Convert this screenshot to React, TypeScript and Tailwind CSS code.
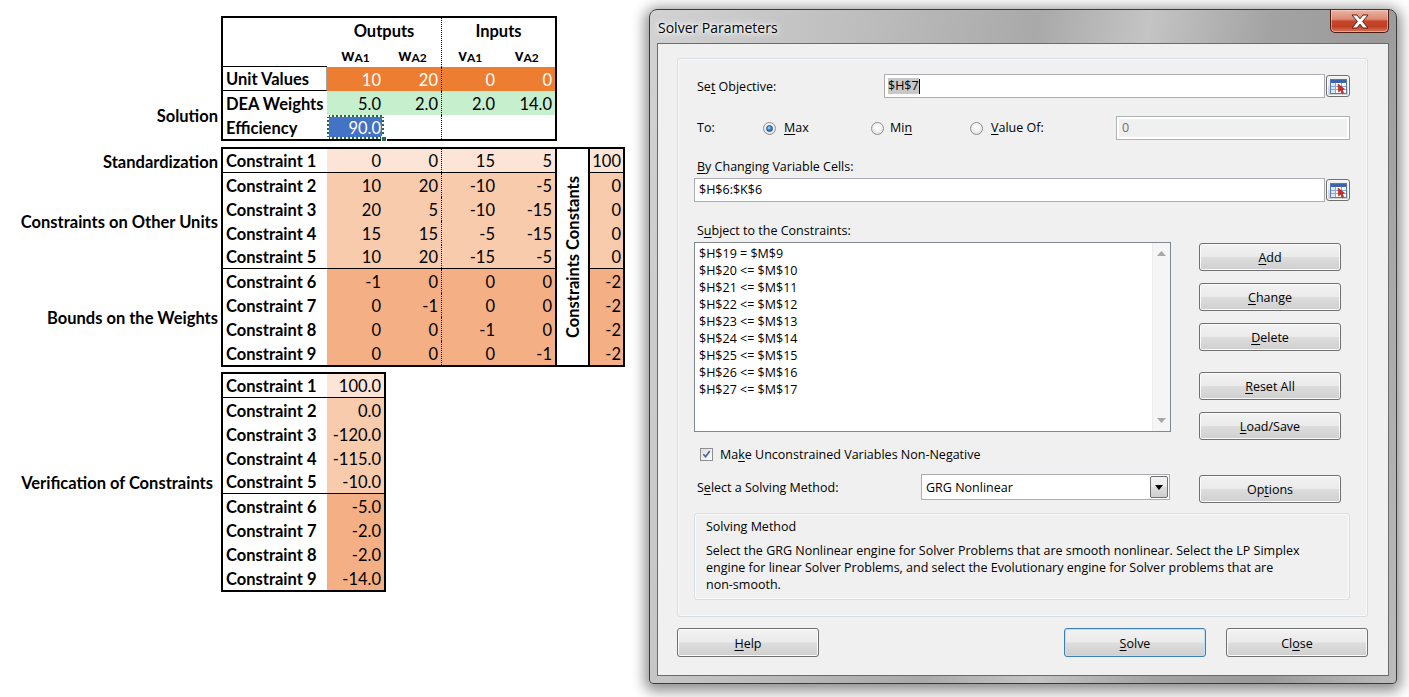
import React from "react";

type R = { label: string; vals: string[]; c: string; bg: string; line?: boolean };

const t2: R[] = [
  { label: "Constraint 1", vals: ["0", "0", "15", "5"], c: "100", bg: "bg-[#FCE4D6]", line: true },
  { label: "Constraint 2", vals: ["10", "20", "-10", "-5"], c: "0", bg: "bg-[#F8CBAD]" },
  { label: "Constraint 3", vals: ["20", "5", "-10", "-15"], c: "0", bg: "bg-[#F8CBAD]" },
  { label: "Constraint 4", vals: ["15", "15", "-5", "-15"], c: "0", bg: "bg-[#F8CBAD]" },
  { label: "Constraint 5", vals: ["10", "20", "-15", "-5"], c: "0", bg: "bg-[#F8CBAD]", line: true },
  { label: "Constraint 6", vals: ["-1", "0", "0", "0"], c: "-2", bg: "bg-[#F4B084]" },
  { label: "Constraint 7", vals: ["0", "-1", "0", "0"], c: "-2", bg: "bg-[#F4B084]" },
  { label: "Constraint 8", vals: ["0", "0", "-1", "0"], c: "-2", bg: "bg-[#F4B084]" },
  { label: "Constraint 9", vals: ["0", "0", "0", "-1"], c: "-2", bg: "bg-[#F4B084]" },
];

const t3 = ["100.0", "0.0", "-120.0", "-115.0", "-10.0", "-5.0", "-2.0", "-2.0", "-14.0"];

function Num({ children, cls = "" }: { children?: React.ReactNode; cls?: string }) {
  return <div className={`w-[57px] h-full flex items-center justify-end pr-[3px] pt-[2px] ${cls}`}>{children}</div>;
}

const labCell = "w-[104px] h-full flex items-center pl-[3px] pt-[2px] font-bold whitespace-nowrap";

function Table1() {
  return (
    <div className="w-[336px] border-2 border-black bg-white flex flex-col">
      <div className="h-[49px] flex">
        <div className="w-[104px] border-b border-black" />
        <div className="w-[114px] flex flex-col font-bold">
          <div className="h-[25px] flex items-center justify-center pt-[2px]">Outputs</div>
          <div className="h-[24px] flex">
            <div className="w-[57px] flex items-center justify-center">w<sub className="text-[12px]">A1</sub></div>
            <div className="w-[57px] flex items-center justify-center">w<sub className="text-[12px]">A2</sub></div>
          </div>
        </div>
        <div className="w-[114px] flex flex-col font-bold border-l border-dotted border-black">
          <div className="h-[25px] flex items-center justify-center pt-[2px]">Inputs</div>
          <div className="h-[24px] flex">
            <div className="w-[57px] flex items-center justify-center">v<sub className="text-[12px]">A1</sub></div>
            <div className="w-[57px] flex items-center justify-center">v<sub className="text-[12px]">A2</sub></div>
          </div>
        </div>
      </div>
      <div className="h-[24px] flex">
        <div className={`${labCell} border-b border-black border-r border-r-[#a6a6a6]`}>Unit Values</div>
        <div className="flex bg-[#ED7D31] text-white">
          <Num>10</Num>
          <Num>20</Num>
          <Num cls="border-l border-dotted border-black">0</Num>
          <Num>0</Num>
        </div>
      </div>
      <div className="h-[24px] flex">
        <div className={labCell}>DEA Weights</div>
        <div className="flex bg-[#C6EFCE]">
          <Num>5.0</Num>
          <Num>2.0</Num>
          <Num cls="border-l border-dotted border-black">2.0</Num>
          <Num>14.0</Num>
        </div>
      </div>
      <div className="h-[24px] flex">
        <div className={labCell}>Efficiency</div>
        <div className="relative w-[57px] h-full bg-[#4472C4] text-white flex items-center justify-end pr-[3px] pt-[2px]">
          90.0
          <div className="absolute inset-0 border-2 border-[#1f6b43]" />
          <div className="absolute inset-0 border-2 border-dotted border-white" />
          <div className="absolute -right-[3px] -bottom-[3px] w-[6px] h-[6px] bg-[#1f6b43] border border-white" />
        </div>
        <Num />
        <Num cls="border-l border-dotted border-black" />
        <Num />
      </div>
    </div>
  );
}

function Table2() {
  return (
    <div className="w-[404px] border-2 border-black bg-white flex">
      <div className="flex flex-col">
        {t2.map((r) => (
          <div key={r.label} className={`h-[24px] flex ${r.line ? "border-b border-black" : ""}`}>
            <div className={`${labCell} bg-white`}>{r.label}</div>
            <div className={`flex ${r.bg}`}>
              <Num>{r.vals[0]}</Num>
              <Num>{r.vals[1]}</Num>
              <Num cls="border-l border-dotted border-black">{r.vals[2]}</Num>
              <Num>{r.vals[3]}</Num>
            </div>
          </div>
        ))}
      </div>
      <div className="w-[2px] bg-black" />
      <div className="w-[31px] flex items-center justify-center pl-[2px]">
        <span className="[writing-mode:vertical-rl] rotate-180 font-bold whitespace-nowrap">Constraints Constants</span>
      </div>
      <div className="w-[2px] bg-black" />
      <div className="flex flex-col w-[33px]">
        {t2.map((r) => (
          <div key={r.label} className={`h-[24px] flex items-center justify-end pr-[2px] pt-[2px] ${r.bg} ${r.line ? "border-b border-black" : ""}`}>
            {r.c}
          </div>
        ))}
      </div>
    </div>
  );
}

function Table3() {
  return (
    <div className="w-[165px] border-2 border-black bg-white flex flex-col">
      {t3.map((v, i) => (
        <div key={i} className={`h-[24px] flex ${i === 0 || i === 4 ? "border-b border-black" : ""}`}>
          <div className={labCell}>Constraint {i + 1}</div>
          <Num cls={i === 0 ? "bg-[#FCE4D6]" : i < 5 ? "bg-[#F8CBAD]" : "bg-[#F4B084]"}>{v}</Num>
        </div>
      ))}
    </div>
  );
}

function Sheet() {
  const lab = "flex items-center justify-end pr-[3px] pt-[2px] font-bold whitespace-nowrap";
  return (
    <div className="w-[649px] shrink-0 pt-[16px] flex flex-col font-['Lato','Liberation_Sans',sans-serif] text-[16.5px] leading-none text-black">
      <div className="flex">
        <div className="w-[221px] flex flex-col">
          <div className="h-[75px]" />
          <div className={`h-[48px] ${lab}`}>Solution</div>
        </div>
        <Table1 />
      </div>
      <div className="flex mt-[6px]">
        <div className="w-[221px] flex flex-col">
          <div className="h-[2px]" />
          <div className={`h-[24px] ${lab}`}>Standardization</div>
          <div className={`h-[96px] ${lab}`}>Constraints on Other Units</div>
          <div className={`h-[96px] ${lab}`}>Bounds on the Weights</div>
        </div>
        <Table2 />
      </div>
      <div className="flex mt-[5px]">
        <div className="w-[221px] flex flex-col">
          <div className="h-[2px]" />
          <div className={`h-[216px] ${lab} pr-[8px]`}>Verification of Constraints</div>
        </div>
        <Table3 />
      </div>
    </div>
  );
}

const btnBg =
  "bg-[linear-gradient(to_bottom,#f2f2f2_0%,#ebebeb_48%,#dddddd_52%,#cfcfcf_100%)]";

function Btn({ children, focus = false, cls = "" }: { children: React.ReactNode; focus?: boolean; cls?: string }) {
  return (
    <div
      className={`w-[142px] h-[28px] rounded-[3px] border ${
        focus ? "border-[#3c7fb1] shadow-[inset_0_0_0_1px_#b8e2f8]" : "border-[#707070] shadow-[inset_0_0_0_1px_#fbfbfb]"
      } ${btnBg} flex items-center justify-center pt-[2px] ${cls}`}
    >
      {children}
    </div>
  );
}

function U({ children }: { children: React.ReactNode }) {
  return <span className="underline underline-offset-2">{children}</span>;
}

function RefBtn() {
  return (
    <div className={`w-[24px] h-[22px] rounded-[3px] border border-[#707070] ${btnBg} shadow-[inset_0_0_0_1px_#fbfbfb] flex items-center justify-center`}>
      <svg width="17" height="15" viewBox="0 0 17 15">
        <rect x="0.5" y="0.5" width="16" height="14" fill="#ffffff" stroke="#5878b0" />
        <rect x="1" y="1" width="15" height="3" fill="#3c64ad" />
        <rect x="1" y="4" width="4" height="10" fill="#dbe6f6" />
        <line x1="1" y1="7.5" x2="16" y2="7.5" stroke="#8aa6d6" />
        <line x1="1" y1="10.5" x2="16" y2="10.5" stroke="#8aa6d6" />
        <line x1="5.5" y1="4" x2="5.5" y2="14" stroke="#8aa6d6" />
        <line x1="11.5" y1="4" x2="11.5" y2="14" stroke="#8aa6d6" />
        <polygon points="8,5 14.5,10 12,10.6 13.6,13.6 12.2,14.3 10.6,11.3 8.6,13" fill="#d8281c" stroke="#8a1510" strokeWidth="0.5" />
      </svg>
    </div>
  );
}

function Radio({ on = false }: { on?: boolean }) {
  return (
    <div className="w-[13px] h-[13px] rounded-full border border-[#8e8f8f] bg-[radial-gradient(circle_at_50%_40%,#ffffff_0%,#f0f0f0_50%,#cfcfcf_100%)] flex items-center justify-center shrink-0">
      {on && (
        <div className="w-[7px] h-[7px] rounded-full bg-[radial-gradient(circle_at_40%_35%,#b7e3ff_0%,#3d8ad8_45%,#0f3f86_100%)] border border-[#1c4f8f]" />
      )}
    </div>
  );
}

function CloseBtn() {
  return (
    <div className="w-[59px] h-[23px] rounded-b-[5px] border border-t-0 border-[#4a1c14] bg-[linear-gradient(to_bottom,#eab3a5_0%,#dd8a73_42%,#c7462b_50%,#c04025_75%,#d9785a_100%)] shadow-[inset_0_0_0_1px_rgba(255,220,210,0.5)] flex items-center justify-center">
      <svg width="20" height="15" viewBox="0 0 20 15">
        <path
          d="M2 1 H7 L10 4.8 L13 1 H18 L12.6 7.5 L18 14 H13 L10 10.2 L7 14 H2 L7.4 7.5 Z"
          fill="#ffffff"
          stroke="#5a1d12"
          strokeWidth="1"
          strokeLinejoin="round"
        />
      </svg>
    </div>
  );
}

const constraints = [
  "$H$19 = $M$9",
  "$H$20 <= $M$10",
  "$H$21 <= $M$11",
  "$H$22 <= $M$12",
  "$H$23 <= $M$13",
  "$H$24 <= $M$14",
  "$H$25 <= $M$15",
  "$H$26 <= $M$16",
  "$H$27 <= $M$17",
];

function Dialog() {
  return (
    <div className="mt-[9px] w-[748px] h-[675px] shrink-0 rounded-t-[8px] rounded-b-[4px] border border-[#3b3b3b] bg-[linear-gradient(100deg,#d2d2d2_0%,#bdbdbd_25%,#a9a9a9_45%,#c4c4c4_58%,#a3a3a3_72%,#9a9a9a_85%,#bcbcbc_100%)] shadow-[0_3px_14px_4px_rgba(0,0,0,0.45)] flex flex-col px-[7px] pb-[7px] font-['Open_Sans','Noto_Sans',sans-serif] text-[12.5px] leading-[16px] text-black">
      <div className="h-[33px] shrink-0 flex justify-between items-start">
        <div className="pl-[1px] pt-[10px] text-[14px] leading-[16px] [text-shadow:0_0_6px_#ffffff,0_0_3px_#ffffff,0_0_10px_#ffffff]">
          Solver Parameters
        </div>
        <CloseBtn />
      </div>
      <div className="flex-1 border border-[#6b6b6b] bg-[#f0f0f0] flex flex-col">
        <div className="mt-[14px] ml-[19px] mr-[20px] h-[559px] rounded-[3px] border border-[#d6dde3] shadow-[inset_0_0_0_1px_#fafafa] flex flex-col pl-[16px] pr-[17px]">
          {/* Set objective */}
          <div className="mt-[15px] h-[24px] flex items-center">
            <div className="w-[190px] pl-[3px] pt-[1px]">
              Se<U>t</U> Objective:
            </div>
            <div className="w-[441px] h-[24px] border border-[#abadb3] bg-white flex items-center pl-[3px]">
              <span className="bg-[#c8c8c8]">$H$7</span>
              <span className="w-[1px] h-[15px] bg-black" />
            </div>
            <div className="ml-[1px]">
              <RefBtn />
            </div>
          </div>
          {/* To */}
          <div className="mt-[18px] h-[24px] flex items-center">
            <div className="w-[69px] pl-[3px]">To:</div>
            <div className="w-[108px] flex items-center gap-[8px]">
              <Radio on />
              <span>
                <U>M</U>ax
              </span>
            </div>
            <div className="w-[99px] flex items-center gap-[6px]">
              <Radio />
              <span>
                Mi<U>n</U>
              </span>
            </div>
            <div className="w-[146px] flex items-center gap-[8px]">
              <Radio />
              <span>
                <U>V</U>alue Of:
              </span>
            </div>
            <div className="w-[234px] h-[24px] border border-[#adb2b5] p-[2px] bg-white">
              <div className="w-full h-full bg-[#f0f0f0] pl-[3px] leading-[18px] text-[#6d6d6d]">0</div>
            </div>
          </div>
          {/* By changing */}
          <div className="mt-[18px] pl-[3px] pt-[1px]">
            <U>B</U>y Changing Variable Cells:
          </div>
          <div className="mt-[3px] h-[24px] flex items-center">
            <div className="w-[631px] h-[24px] border border-[#abadb3] bg-white flex items-center pl-[4px]">$H$6:$K$6</div>
            <div className="ml-[1px]">
              <RefBtn />
            </div>
          </div>
          {/* Subject */}
          <div className="mt-[20px] pl-[3px] pt-[1px]">
            S<U>u</U>bject to the Constraints:
          </div>
          <div className="mt-[3px] flex items-start">
            <div className="w-[477px] h-[190px] border border-[#828790] bg-white flex">
              <div className="flex-1 pl-[4px] pt-[2px] leading-[17px] whitespace-pre">
                {constraints.map((c) => (
                  <div key={c}>{c}</div>
                ))}
              </div>
              <div className="w-[18px] border-l border-[#ececec] bg-[#f5f5f5] flex flex-col justify-between items-center py-[8px]">
                <svg width="9" height="5" viewBox="0 0 9 5">
                  <polygon points="0,5 4.5,0 9,5" fill="#a6a6a6" />
                </svg>
                <svg width="9" height="5" viewBox="0 0 9 5">
                  <polygon points="0,0 9,0 4.5,5" fill="#a6a6a6" />
                </svg>
              </div>
            </div>
            <div className="ml-[28px] mt-[1px] flex flex-col">
              <Btn>
                <U>A</U>dd
              </Btn>
              <Btn cls="mt-[12px]">
                <U>C</U>hange
              </Btn>
              <Btn cls="mt-[12px]">
                <U>D</U>elete
              </Btn>
              <Btn cls="mt-[21px]">
                <U>R</U>eset All
              </Btn>
              <Btn cls="mt-[12px]">
                <U>L</U>oad/Save
              </Btn>
            </div>
          </div>
          {/* Checkbox */}
          <div className="mt-[6px] h-[16px] flex items-center pl-[6px]">
            <div className="w-[13px] h-[13px] border border-[#8e8f8f] bg-[linear-gradient(135deg,#dcdcdc,#ffffff)] p-[1px] flex items-center justify-center">
              <svg width="10" height="10" viewBox="0 0 10 10">
                <path d="M1.5 5.2 L4 8 L8.6 1.6" fill="none" stroke="#4a5d9a" strokeWidth="1.8" />
              </svg>
            </div>
            <span className="ml-[7px] pt-[1px]">
              Ma<U>k</U>e Unconstrained Variables Non-Negative
            </span>
          </div>
          {/* Select method */}
          <div className="mt-[12px] flex items-start">
            <div className="w-[227px] pl-[3px] pt-[1px] h-[26px] flex items-center">
              S<U>e</U>lect a Solving Method:
            </div>
            <div className="w-[249px] h-[26px] border border-[#abadb3] bg-white flex items-center">
              <div className="flex-1 pl-[4px] pt-[1px]">GRG Nonlinear</div>
              <div className={`w-[18px] h-[22px] mr-[1px] border border-[#707070] rounded-[2px] ${btnBg} flex items-center justify-center`}>
                <svg width="8" height="5" viewBox="0 0 8 5">
                  <polygon points="0,0 8,0 4,5" fill="#000000" />
                </svg>
              </div>
            </div>
            <Btn cls="ml-[29px] mt-[1px]">
              Op<U>t</U>ions
            </Btn>
          </div>
          {/* Solving method group */}
          <div className="mt-[10px] w-[656px] h-[87px] rounded-[3px] border border-[#d6dde3] shadow-[inset_0_0_0_1px_#fafafa] pl-[11px] pt-[5px]">
            <div>Solving Method</div>
            <div className="mt-[7px] leading-[17px] whitespace-nowrap">
              Select the GRG Nonlinear engine for Solver Problems that are smooth nonlinear. Select the LP Simplex
              <br />
              engine for linear Solver Problems, and select the Evolutionary engine for Solver problems that are
              <br />
              non-smooth.
            </div>
          </div>
        </div>
        {/* bottom buttons */}
        <div className="mt-[11px] flex pl-[19px] pr-[20px]">
          <Btn cls="h-[29px]">
            <U>H</U>elp
          </Btn>
          <div className="flex-1" />
          <Btn focus cls="h-[29px]">
            <U>S</U>olve
          </Btn>
          <Btn cls="ml-[20px] h-[29px]">
            Cl<U>o</U>se
          </Btn>
        </div>
      </div>
    </div>
  );
}

export default function App() {
  return (
    <div className="w-[1409px] h-[697px] bg-white overflow-hidden flex">
      <Sheet />
      <Dialog />
    </div>
  );
}
